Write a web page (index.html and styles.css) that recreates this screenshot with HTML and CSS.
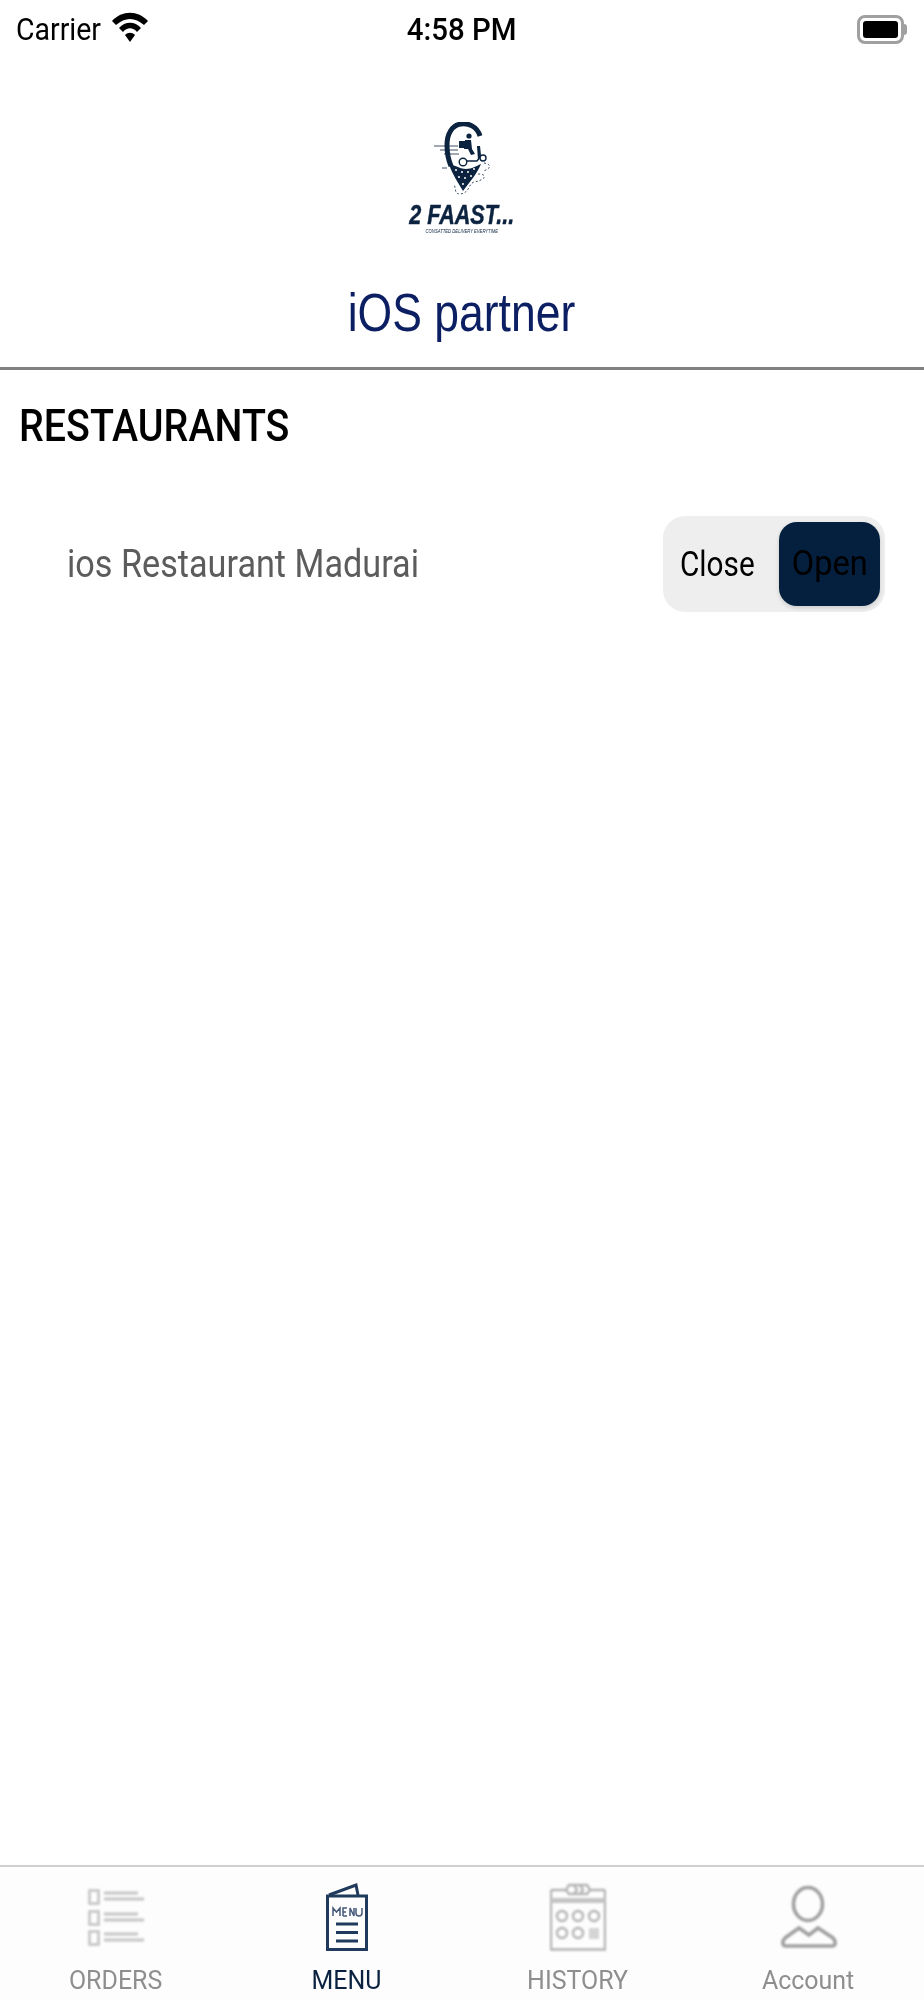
FILE: index.html
```html
<!DOCTYPE html>
<html lang="en">
<head>
    <meta charset="UTF-8">
    <meta name="viewport" content="width=device-width, initial-scale=1.0">
    <title>Restaurants</title>
    <link rel="stylesheet" href="styles.css">
</head>
<body>
    <div class="app">
        <div class="status-bar">
            <div class="status-left">
                <span class="carrier">Carrier</span>
                <svg class="wifi" viewBox="0 0 36 30" width="36" height="30">
                    <path d="M0 9 C10 -2 26 -2 36 9 L32 13 C23 5 13 5 4 13 Z" fill="#000"/>
                    <path d="M7 16 C13 9 23 9 29 16 L25 20 C21 15 15 15 11 20 Z" fill="#000"/>
                    <path d="M13 23 C16 20 20 20 23 23 L18 30 Z" fill="#000"/>
                </svg>
            </div>
            <div class="status-time">4:58 PM</div>
            <div class="status-right">
                <div class="battery"><div class="battery-level"></div></div>
                <div class="battery-cap"></div>
            </div>
        </div>

        <header class="header">
            <div class="logo">
                <svg class="logo-pin" viewBox="0 0 58 74" width="58" height="74">
                    <path d="M46 14 C43 4 34 1 27 2 C18 3 13 12 13 23 C13 31 14 37 17 44" fill="none" stroke="#0c2340" stroke-width="5"/>
                    <path d="M15 42 C24 44 26 47 32 47 C38 47 42 44 47 42 C44 50 36 60 29 69 C24 60 18 52 15 42 Z" fill="#0c2340"/>
                    <g fill="#fff">
                        <circle cx="22" cy="48" r="1"/><circle cx="28" cy="50" r="1"/><circle cx="34" cy="50" r="1"/><circle cx="40" cy="47" r="1"/>
                        <circle cx="25" cy="55" r="1"/><circle cx="31" cy="56" r="1"/><circle cx="37" cy="54" r="1"/><circle cx="29" cy="62" r="1"/>
                    </g>
                    <g fill="#0c2340">
                        <circle cx="35" cy="14" r="2.6"/>
                        <path d="M31 18 L37 18 L38 27 L41 32 L37 33 L34 27 L30 27 Z"/>
                        <rect x="25" y="19" width="6" height="7"/>
                        <path d="M43 24 L46 24 L47 33 L44 38 Z"/>
                    </g>
                    <g fill="none" stroke="#0c2340" stroke-width="1.4">
                        <circle cx="29" cy="40" r="3.8"/>
                        <circle cx="49" cy="36" r="3"/>
                        <path d="M33 39 H43 L46 35"/>
                    </g>
                    <g fill="none" stroke="#0c2340" stroke-width=".8">
                        <path d="M0 24 L24 24 M6 28 L24 28 M10 32 L25 32 M8 46 L13 46"/>
                        <path d="M50 41 C58 42 57 47 49 49" stroke-dasharray="2 2"/>
                        <path d="M44 52 C54 52 52 58 40 60 C34 62 36 71 26 72 C20 72 22 66 20 62" stroke-dasharray="2 2"/>
                    </g>
                </svg>
                <div class="logo-name">2 FAAST...</div>
                <div class="logo-tag">CONSATTED DELIVERY EVERYTIME</div>
            </div>
            <h1 class="partner-name">iOS partner</h1>
        </header>

        <main class="content">
            <h2 class="section-title">RESTAURANTS</h2>
            <div class="restaurant-row">
                <span class="restaurant-name">ios Restaurant Madurai</span>
                <div class="toggle">
                    <div class="toggle-option"><span class="close-text">Close</span></div>
                    <div class="toggle-option active"><span class="open-text">Open</span></div>
                </div>
            </div>
        </main>

        <nav class="tab-bar">
            <div class="tab">
                <svg class="tab-icon blurry" viewBox="0 -6 56 68" width="56" height="68">
                    <g fill="none" stroke="#c4c4c4" stroke-width="2.6">
                        <rect x="1.5" y="1.5" width="9" height="13"/>
                        <rect x="1.5" y="22.5" width="9" height="13"/>
                        <rect x="1.5" y="42.5" width="9" height="13"/>
                    </g>
                    <g stroke="#c4c4c4" stroke-width="2.8">
                        <path d="M16 4 H50 M16 10 H56 M16 25 H50 M16 31 H56 M16 45 H50 M16 51 H56"/>
                    </g>
                </svg>
                <span class="tab-label">ORDERS</span>
            </div>
            <div class="tab active">
                <svg class="tab-icon menu-icon" viewBox="0 0 42 68" width="42" height="68">
                    <g fill="none" stroke="#1f3a5c" stroke-width="3">
                        <path d="M1.5 66.5 V13 H40.5 V66.5 Z"/>
                        <path d="M3 12 L30 2 L32 12"/>
                    </g>
                    <g stroke="#1f3a5c" stroke-width="3">
                        <path d="M10 41 H32 M10 49.5 H32 M10 58 H32"/>
                    </g>
                    <path d="M7 33 V25 L10.5 29 L14 25 V33 M17 33 V25 H21 M17 29 H20 M17 33 H21 M24 33 V25 L28 33 V25 M30 25 V30 C30 34 36 34 36 30 V25" fill="none" stroke="#46597a" stroke-width="1.5"/>
                </svg>
                <span class="tab-label">MENU</span>
            </div>
            <div class="tab">
                <svg class="tab-icon blurry" viewBox="0 0 56 68" width="56" height="68">
                    <g fill="none" stroke="#b4b4b4" stroke-width="2.4">
                        <path d="M1 7 H16 M40 7 H55 M1 7 V66.5 H55 V7"/>
                        <path d="M16 7 L19 2 H37 L40 7 L37 11 H19 Z"/>
                        <path d="M24 2 L27 7 L24 11 M30 2 L33 7 L30 11"/>
                        <circle cx="12" cy="33" r="5"/><circle cx="28" cy="33" r="5"/><circle cx="44" cy="33" r="5"/>
                        <circle cx="12" cy="50" r="5"/><circle cx="28" cy="50" r="5"/>
                    </g>
                    <rect x="1" y="15" width="54" height="5" fill="#c4c4c4"/>
                    <rect x="39" y="45" width="10" height="11" fill="#d4d4d4"/>
                </svg>
                <span class="tab-label">HISTORY</span>
            </div>
            <div class="tab">
                <svg class="tab-icon blurry" viewBox="0 -3 56 68" width="56" height="68">
                    <g fill="none" stroke="#a0a0a0" stroke-width="3.6">
                        <ellipse cx="27" cy="18" rx="14.5" ry="16.5"/>
                        <path d="M18 42 L4 52 C1 55 1 60 5 60 H51 C55 60 55 55 52 52 L37 42 L28 49 Z"/>
                    </g>
                </svg>
                <span class="tab-label">Account</span>
            </div>
        </nav>
    </div>
</body>
</html>
```

FILE: styles.css
```css
body, html {
    margin: 0;
    padding: 0;
    height: 100%;
    font-family: Roboto, "Liberation Sans", sans-serif;
    background-color: #fff;
    color: #000;
}

.app {
    display: flex;
    flex-direction: column;
    height: 2000px;
}

/* the reference text is taller and narrower than Roboto, hence the scaleX on most labels */
.status-bar {
    display: grid;
    grid-template-columns: 1fr auto 1fr;
    align-items: center;
    height: 58px;
    padding: 0 17px 0 16px;
    font-size: 32px;
}

.status-left {
    display: flex;
    align-items: center;
}

.carrier {
    transform: scaleX(0.89);
    transform-origin: left center;
}

.wifi {
    margin-top: -5px;
}

.status-time {
    font-weight: 500;
    transform: scaleX(0.92);
}

.status-right {
    display: flex;
    align-items: center;
    justify-content: flex-end;
}

.battery {
    width: 47px;
    height: 29px;
    border: 3px solid #a0a0a0;
    border-radius: 8px;
    padding: 3px;
    box-sizing: border-box;
}

.battery-level {
    height: 100%;
    background-color: #000;
    border-radius: 3px;
}

.battery-cap {
    width: 3px;
    height: 11px;
    background-color: #a0a0a0;
    border-radius: 0 3px 3px 0;
}

.header {
    display: flex;
    flex-direction: column;
    align-items: center;
    height: 309px;
    border-bottom: 3px solid #808080;
}

.logo {
    display: flex;
    flex-direction: column;
    align-items: center;
    margin-top: 64px;
    filter: blur(0.6px);
}

.logo-pin {
    margin-left: 2px;
}

.logo-name {
    margin-top: 8px;
    font-family: "Liberation Sans", sans-serif;
    font-size: 27px;
    font-weight: bold;
    font-style: italic;
    line-height: 22px;
    color: #0c2340;
    -webkit-text-stroke: 0.5px #0c2340;
    transform: scaleX(0.8);
}

.logo-tag {
    margin-top: 2px;
    font-family: "Liberation Sans", sans-serif;
    font-size: 6px;
    font-style: italic;
    line-height: 7px;
    color: #0c2340;
    transform: scaleX(0.7);
}

.partner-name {
    margin: 52px 0 0;
    font-family: "Liberation Sans", sans-serif;
    font-size: 53px;
    font-weight: normal;
    line-height: 52px;
    color: #0c1f63;
    transform: scaleX(0.84);
}

.content {
    flex: 1;
}

.section-title {
    width: max-content;
    margin: 32px 0 0 19px;
    font-size: 44px;
    font-weight: 500;
    line-height: 48px;
    transform: scaleX(0.895);
    transform-origin: left center;
}

.restaurant-row {
    display: flex;
    align-items: center;
    justify-content: space-between;
    margin-top: 66px;
    padding: 0 39px 0 67px;
}

.restaurant-name {
    font-size: 38px;
    color: #5c5c5c;
    transform: scaleX(0.9);
    transform-origin: left center;
}

.toggle {
    display: flex;
    align-items: center;
    justify-content: space-between;
    width: 222px;
    height: 96px;
    padding: 0 5px 0 17px;
    box-sizing: border-box;
    background-color: #eee;
    border-radius: 22px;
}

.toggle-option {
    font-size: 35px;
}

.close-text {
    display: inline-block;
    transform: scaleX(0.85);
    transform-origin: left center;
}

.open-text {
    display: inline-block;
    transform: scaleX(0.93);
}

.toggle-option.active {
    width: 101px;
    height: 84px;
    line-height: 84px;
    text-align: center;
    background-color: #051f3f;
    border-radius: 18px;
    box-shadow: 0 2px 4px rgba(0, 0, 0, 0.15);
}

.tab-bar {
    display: grid;
    grid-template-columns: repeat(4, 1fr);
    height: 133px;
    border-top: 2px solid #cfcfcf;
    background-color: #fdfdfd;
}

.tab {
    display: flex;
    flex-direction: column;
    align-items: center;
    color: #8e8e8e;
}

.tab.active {
    color: #0a2240;
}

.tab-icon {
    margin-top: 16px;
}

.blurry {
    filter: blur(0.8px);
}

.menu-icon {
    filter: blur(0.4px);
}

.tab-label {
    margin-top: 14px;
    font-size: 26px;
    line-height: 30px;
    transform: scaleX(0.96);
}
```
